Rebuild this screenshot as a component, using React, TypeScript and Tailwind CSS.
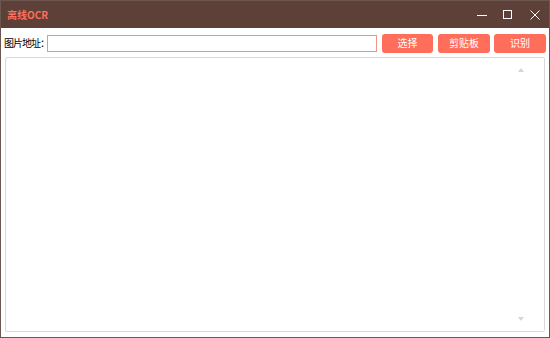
import React from "react";

export default function App() {
  return (
    <div
      className="w-[550px] h-[338px] flex flex-col bg-white border border-[#6b5650] overflow-hidden"
      style={{ fontFamily: '"Microsoft YaHei", "Noto Sans CJK SC", sans-serif' }}
    >
      <div className="h-[27px] shrink-0 bg-[#5d4037] flex items-center pl-[6px]">
        <span className="text-[10px] font-bold text-[#ff6e5a] leading-none">离线OCR</span>
        <div className="ml-auto flex items-center h-full">
          <div className="w-[26px] h-full flex items-center justify-center">
            <svg width="10" height="10" viewBox="0 0 10 10">
              <path d="M0 5.5H10" stroke="#ffffff" strokeWidth="1" />
            </svg>
          </div>
          <div className="w-[26px] h-full flex items-center justify-center">
            <svg width="10" height="10" viewBox="0 0 10 10">
              <rect x="0.5" y="0.5" width="8" height="8" fill="none" stroke="#ffffff" strokeWidth="1" />
            </svg>
          </div>
          <div className="w-[28px] h-full flex items-center justify-center">
            <svg width="10" height="10" viewBox="0 0 10 10">
              <path d="M0.5 0.5L9.5 9.5M9.5 0.5L0.5 9.5" stroke="#ffffff" strokeWidth="1" />
            </svg>
          </div>
        </div>
      </div>
      <div className="flex items-center h-[29px] pl-[3px] pr-[3px] pt-[1px]">
        <span className="w-[43px] shrink-0 whitespace-nowrap text-[10px] tracking-[-1px] text-black leading-none">
          图片地址：
        </span>
        <div className="w-[330px] shrink-0 h-[17px] border border-[#ee9487] bg-white" />
        <button className="shrink-0 ml-[5px] w-[51px] h-[19px] rounded-[3px] bg-[#ff6e5a] text-white text-[10px] leading-none">
          选择
        </button>
        <button className="shrink-0 ml-[5px] w-[52px] h-[19px] rounded-[3px] bg-[#ff6e5a] text-white text-[10px] leading-none">
          剪贴板
        </button>
        <button className="shrink-0 ml-[4px] w-[52px] h-[19px] rounded-[3px] bg-[#ff6e5a] text-white text-[10px] leading-none">
          识别
        </button>
      </div>
      <div className="flex-1 px-[4px] pb-[5px]">
        <div className="h-full border border-[#d9d9d9] rounded-[2px] bg-white flex justify-end">
          <div className="w-[12px] mr-[17px] flex flex-col justify-between items-center py-[10px]">
            <svg width="6" height="4" viewBox="0 0 6 4">
              <path d="M0 4L3 0L6 4Z" fill="#d6d6d6" />
            </svg>
            <svg width="6" height="4" viewBox="0 0 6 4">
              <path d="M0 0L3 4L6 0Z" fill="#d6d6d6" />
            </svg>
          </div>
        </div>
      </div>
    </div>
  );
}
